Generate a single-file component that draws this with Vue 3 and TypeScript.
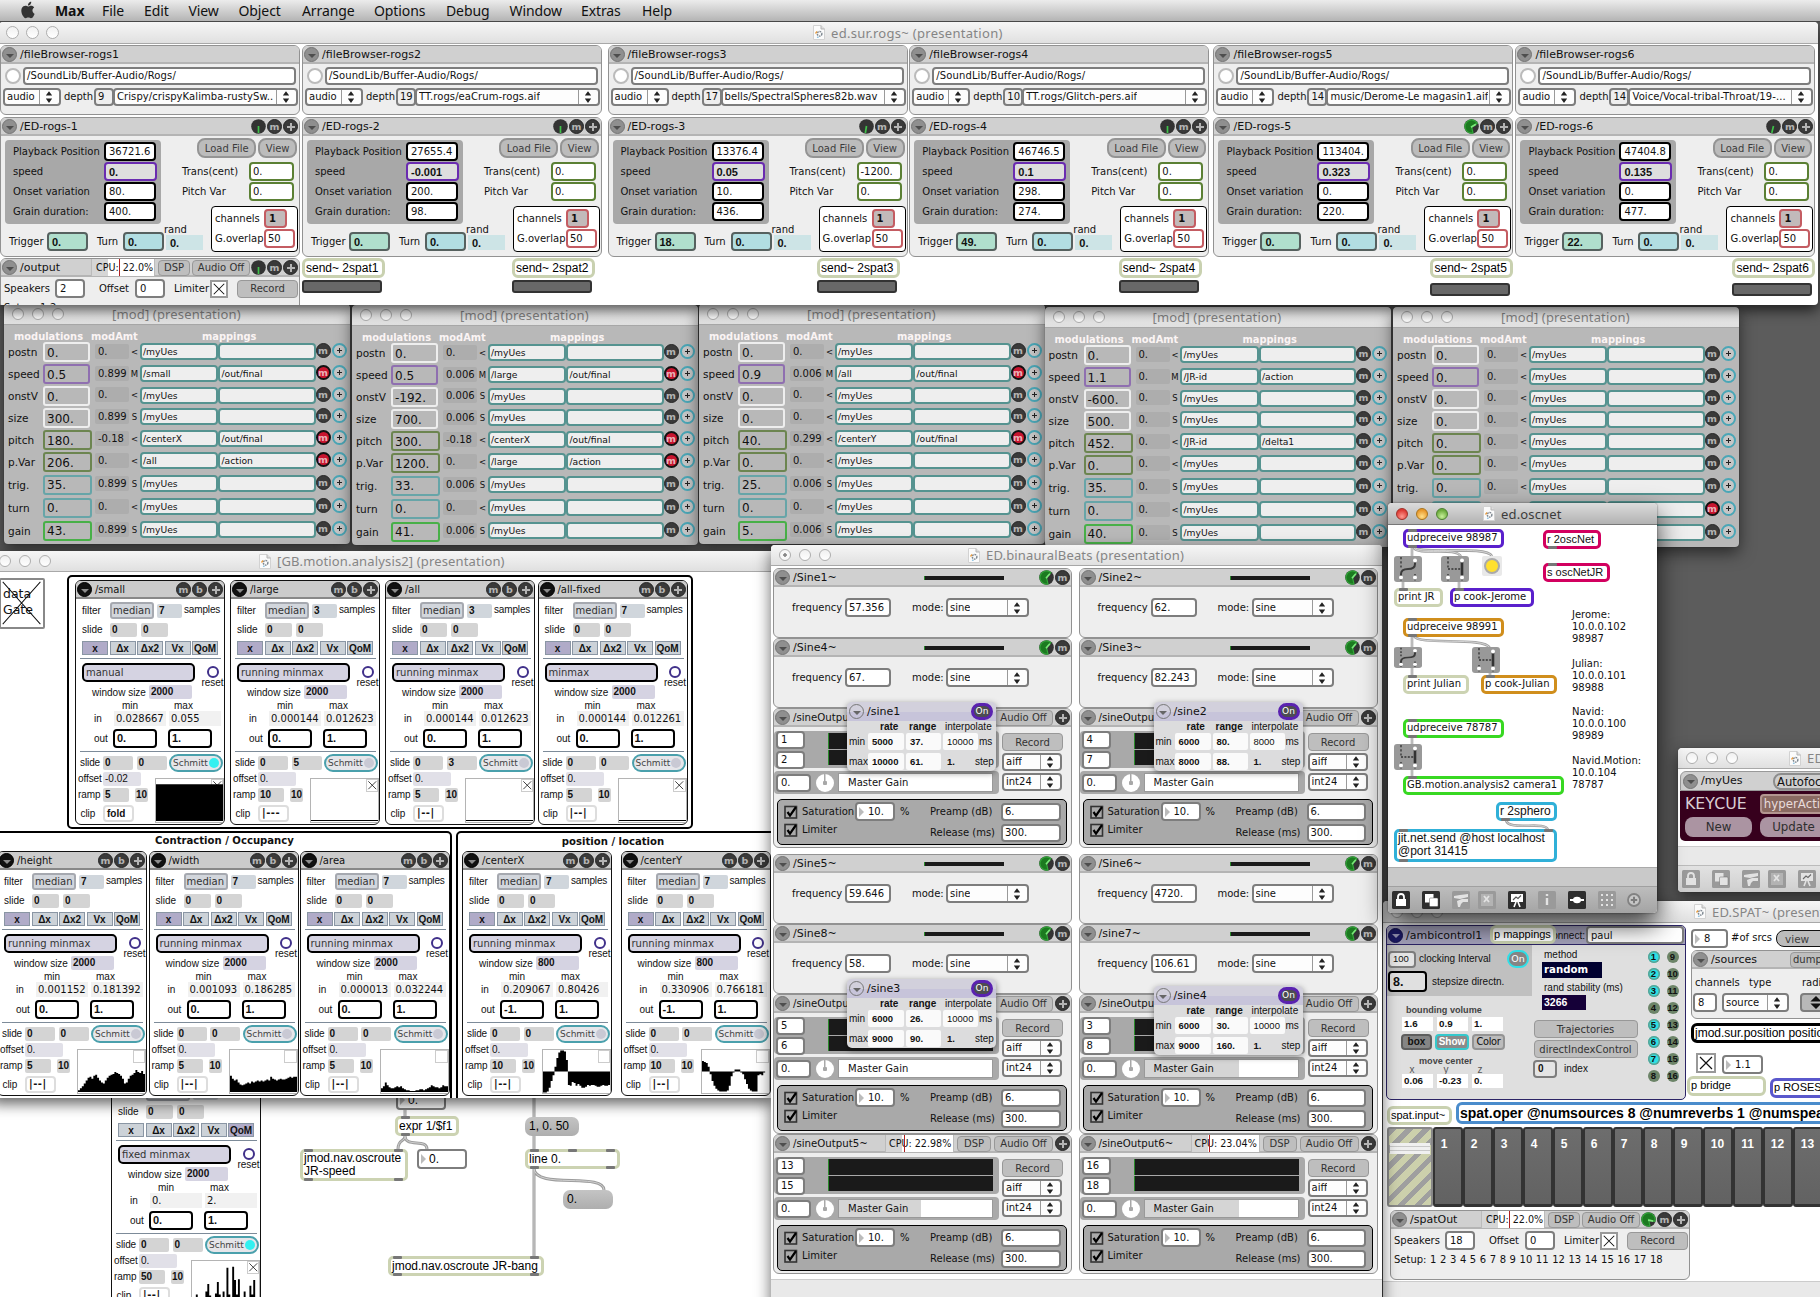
<script setup lang="ts">
import { h } from 'vue'

type P = Record<string, any>

/* ---- shared widgets ---- */
const DocIcon = () =>
  h('svg', { class: 'doc', viewBox: '0 0 12 15' }, [
    h('path', { d: 'M.5.5h7.5l3.5 3.5v10.5h-11z', fill: '#fbfbfb', stroke: '#d2d2d2' }),
    h('path', { d: 'M8 .5v3.5h3.5', fill: '#ddd', stroke: '#b5b5b5' }),
    h('circle', { cx: 6.6, cy: 8.8, r: 2.3, fill: 'none', stroke: '#7d8790', 'stroke-width': 1.4, 'stroke-dasharray': '1.6 .8' }),
    h('path', { d: 'M2.5 8.5l1.5-2', stroke: '#e79a3c', 'stroke-width': 1.3 }),
    h('path', { d: 'M4 12l1.5 .5', stroke: '#6fb4dc', 'stroke-width': 1.3 }),
  ])

const TitleBar = (p: P) =>
  h('div', { class: ['tbar', { live: p.live }] }, [
    h('i', { class: ['tl', p.live ? 'red' : '', p.dot ? 'dot' : ''] }),
    h('i', { class: ['tl', p.live ? 'amber' : ''] }),
    h('i', { class: ['tl', p.live ? 'green' : ''] }),
    h('span', { class: 'ttl' }, [p.doc ? h(DocIcon) : null, p.title]),
  ])

const Fold = () => h('i', { class: 'fold' })

const Knob = (p: P) => {
  const a = ((p.a as number) * Math.PI) / 180
  const r = 6.6
  const x = 7.5 + r * Math.sin(a)
  const y = 7.5 - r * Math.cos(a)
  const full = !!p.full
  return h('svg', { class: 'knob', viewBox: '0 0 15 15' }, [
    h('circle', { cx: 7.5, cy: 7.5, r: 7.3, fill: '#333' }),
    full
      ? h('path', { d: `M7.5 7.5L9 14A${r} ${r} 0 1 1 ${x} ${y}z`, fill: '#1c7a20', stroke: '#33a63a', 'stroke-width': 1.2 })
      : null,
    h('path', {
      d: full ? `M7 8.2L${7.5 + 5 * Math.sin(a)} ${7.5 - 5 * Math.cos(a)}` : `M7.5 7L${x} ${y}`,
      stroke: full ? '#7be87a' : '#3fc24a',
      'stroke-width': 1.7,
    }),
  ])
}

const Rnd = (p: P) => h('i', { class: ['rnd', { hot: p.hot }] }, p.t === '+' ? [h('b', { class: 'plus' })] : p.t)

const Sel = (p: P) =>
  h('div', { class: 'fld sel' }, [
    h('span', p.text),
    h('svg', { viewBox: '0 0 20 16' }, [
      h('path', { d: 'M.5 0v16', stroke: '#999' }),
      h('path', { d: 'M10 2.2l3.2 4.4H6.8zM10 14l3.2-4.4H6.8z', fill: '#222' }),
    ]),
  ])

const Cross = () =>
  h('svg', { class: 'cross', viewBox: '0 0 16 16', preserveAspectRatio: 'none' }, [
    h('path', { d: 'M2 2l12 12M14 2L2 14', stroke: '#111', 'stroke-width': 1.2 }),
  ])

const Tick = () =>
  h('svg', { class: 'tick', viewBox: '0 0 14 14' }, [
    h('rect', { x: 1, y: 1.5, width: 11.5, height: 11.5, fill: '#aaa', stroke: '#333', 'stroke-width': 1.6 }),
    h('path', { d: 'M3.5 7l2.5 3.6L12 2', fill: 'none', stroke: '#000', 'stroke-width': 2.2 }),
  ])

const Cpu = (p: P) =>
  h('div', { class: 'cpu' }, [h('span', 'CPU:'), h('i'), h('span', p.v)])

/* Patch gate glyph: k = 'c' curved path, 's' straight path */
const Gate = (p: P) =>
  h('svg', { class: 'gate', viewBox: '0 0 28 26', preserveAspectRatio: 'none' }, [
    h('rect', { width: 28, height: 26, rx: 3, fill: '#999' }),
    h('path', { d: 'M7 1v11M7 18v8M21 18v8', stroke: '#444', 'stroke-width': 1.6, 'stroke-dasharray': '2.2 2' }),
    p.k === 'c'
      ? h('path', { d: 'M21 5v3c0 4-3 5-7 5s-7 1-7 5v3', fill: 'none', stroke: '#3a3a3a', 'stroke-width': 2 })
      : h('path', { d: 'M21 5v14', stroke: '#333', 'stroke-width': 2.6 }),
    p.k === 's' ? h('path', { d: 'M7 13h13', stroke: '#333', 'stroke-width': 1.6, 'stroke-dasharray': '2 1.4' }) : null,
    ...[[21, 4.5], [7, 21.5], [21, 21.5]].map(([cx, cy]) => h('circle', { cx, cy, r: 2, fill: '#fff' })),
  ])

const path = (d: string, stroke = '#fff', w = 1.8) => h('path', { d, fill: 'none', stroke, 'stroke-width': w })
const toolArt: Record<string, () => any[]> = {
  lock: () => [h('rect', { x: 4, y: 8, width: 10, height: 7, fill: '#fff' }), path('M6 8V6a3 3 0 016 0v2')],
  layers: () => [
    h('rect', { x: 3, y: 3, width: 8.5, height: 8.5, fill: '#fff' }),
    h('rect', { x: 7.5, y: 7, width: 8.5, height: 8.5, rx: 1, fill: '#fff', stroke: '#555', 'stroke-width': 0.5 }),
  ],
  tools: () => [
    h('path', { d: 'M2 5l6-1 8-1v3l-8 2-6-1z', fill: '#fff' }),
    h('path', { d: 'M5 10l5-2 6 0v3l-5 0-2 2-1 3H6z', fill: '#fff' }),
  ],
  close: () => [h('rect', { x: 3, y: 3, width: 12, height: 12, fill: '#fff', opacity: 0.35 }), path('M6 5l5 6M11 5l-5 6')],
  board: () => [
    h('path', { d: 'M3 3h12v8H3z', fill: '#fff' }),
    path('M5 9l3-3 2 1.5 3-3', '#555', 1.1),
    path('M8 11l-2 5M10 11l2 5', '#fff', 1.6),
  ],
  info: () => [path('M9 7v7M9 3v2', '#fff', 2.4)],
  node: () => [path('M2 9h14', '#fff', 2), h('ellipse', { cx: 9, cy: 9, rx: 4, ry: 3.2, fill: '#fff' })],
  grid: () => [h('path', { d: 'M3 4h12M3 9h12M3 14h12', stroke: '#fff', 'stroke-width': 2, 'stroke-dasharray': '2 3' })],
}
const Tool = (p: P) =>
  p.k === 'add'
    ? h('svg', { class: 'tool', viewBox: '0 0 18 18' }, [
        h('circle', { cx: 9, cy: 9, r: 6, fill: '#c6c6c6', stroke: '#828282', 'stroke-width': 1.8 }),
        path('M9 5.8v6.4M5.8 9h6.4', '#7c7c7c', 2),
      ])
    : h('svg', { class: 'tool', viewBox: '0 0 18 18' }, [
        h('rect', { width: 18, height: 18, rx: 1.5, fill: p.on ? '#2e2e2e' : '#9a9a9a' }),
        h('g', { opacity: p.on ? 1 : 0.72 }, toolArt[p.k]()),
      ])

/* ---- data ---- */
const menu: [string, number][] = [
  ['Max', 47], ['File', 42], ['Edit', 44.5], ['View', 50], ['Object', 63.5], ['Arrange', 72],
  ['Options', 72], ['Debug', 63.5], ['Window', 71.5], ['Extras', 61], ['Help', 40],
]

interface Rog {
  gap: number; depth: string; file: string; pos: string; speed: string; onset: string; dur: string
  trans: string; trig: string; a: number; full?: boolean; sends: string[]; drop?: number; pull?: number
}
const rogs: Rog[] = [
  { gap: 0, depth: '9', file: 'Crispy/crispyKalimba-rustySw..', pos: '36721.6', speed: '0.', onset: '80.', dur: '400.', trans: '0.', trig: '0.', a: 180, sends: [] },
  { gap: 2, depth: '19', file: 'TT.rogs/eaCrum-rogs.aif', pos: '27655.4', speed: '-0.001', onset: '200.', dur: '98.', trans: '0.', trig: '0.', a: 180, sends: ['1', '2'], pull: 7 },
  { gap: 5.5, depth: '17', file: 'bells/SpectralSpheres82b.wav', pos: '13376.4', speed: '0.05', onset: '10.', dur: '436.', trans: '-1200.', trig: '18.', a: 190, sends: ['3'], pull: 7.5 },
  { gap: 1.8, depth: '10', file: 'TT.rogs/Glitch-pers.aif', pos: '46746.5', speed: '0.1', onset: '298.', dur: '274.', trans: '0.', trig: '49.', a: 180, sends: ['4'], pull: 7.5 },
  { gap: 4.2, depth: '14', file: 'music/Derome-Le magasin1.aif', pos: '113404.', speed: '0.323', onset: '0.', dur: '220.', trans: '0.', trig: '0.', a: 62, full: true, sends: ['5'], drop: 3 },
  { gap: 2, depth: '14', file: 'Voice/Vocal-tribal-Throat/19-...', pos: '47404.8', speed: '0.135', onset: '0.', dur: '477.', trans: '0.', trig: '22.', a: 195, sends: ['6'], drop: 3 },
]

const labels = ['postn', 'speed', 'onstV', 'size', 'pitch', 'p.Var', 'trig.', 'turn', 'gain']
const tones = ['w', 'p', 'w', 'w', 'o', 'o', 't', 't', 'g']
const rowH = [22, 22, 21.5, 21.5, 22, 22.5, 23.5, 22.5, 23]
const U = '/myUes'
const F = '/out/final'
const mods = [
  { x: 4, y: 304, v: ['0.', '0.5', '0.', '300.', '180.', '206.', '35.', '0.', '43.'], a: ['0.', '0.899', '0.', '0.899', '-0.18', '0.', '0.899', '0.', '0.899'], s: '<M<S<<S<S', m: [U, '/small', U, U, '/centerX', '/all', U, U, U], n: ['', F, '', '', F, '/action', '', '', ''], hot: [1, 4, 5] },
  { x: 352, y: 305, v: ['0.', '0.5', '-192.', '700.', '300.', '1200.', '33.', '0.', '41.'], a: ['0.', '0.006', '0.006', '0.006', '-0.18', '0.', '0.006', '0.', '0.006'], s: '<MSS<<S<S', m: [U, '/large', U, U, '/centerX', '/large', U, U, U], n: ['', F, '', '', F, '/action', '', '', ''], hot: [1, 4, 5] },
  { x: 699, y: 304, v: ['0.', '0.9', '0.', '0.', '40.', '0.', '25.', '0.', '5.'], a: ['0.', '0.006', '0.', '0.', '0.299', '0.', '0.006', '0.', '0.006'], s: '<M<<<<S<S', m: [U, '/all', U, U, '/centerY', U, U, U, U], n: ['', F, '', '', F, '', '', '', ''], hot: [1, 4] },
  { x: 1044.5, y: 307, v: ['0.', '1.1', '-600.', '500.', '452.', '0.', '35.', '0.', '40.'], a: Array(9).fill('0.'), s: '<MSS<<S<S', m: [U, '/JR-id', U, U, '/JR-id', U, U, U, U], n: ['', '/action', '', '', '/delta1', '', '', '', ''], hot: [] as number[] },
  { x: 1393, y: 307, v: Array(9).fill('0.'), a: Array(9).fill('0.'), s: '<<<<<<<<<', m: Array(9).fill(U), n: Array(9).fill(''), hot: [7] },
]

interface Mo {
  x: number; y: number; name: string; n: string; mode: string; win: string; lo: string; hi: string; out: string
  s2: string; off: string; ramp: string; clip: string; led?: boolean; tog?: boolean; sel?: number; g: number[]; mid?: boolean
}
const mo = (o: Partial<Mo>): Mo => ({
  x: 0, y: 580, name: '', n: '7', mode: 'running minmax', win: '2000', lo: '', hi: '', out: '0.',
  s2: '0', off: '0.', ramp: '5', clip: '|--|', g: [], ...o,
})
const flat = (v: number) => Array(35).fill(v)
const motion: Mo[] = [
  mo({ x: 75, name: '/small', mode: 'manual', lo: '0.028667', hi: '0.055', off: '-0.02', clip: 'fold', led: true, tog: true, g: flat(38.5) }),
  mo({ x: 230, name: '/large', n: '3', lo: '0.000144', hi: '0.012623', s2: '5', ramp: '10', clip: '|---', tog: true, g: flat(1) }),
  mo({ x: 385, name: '/all', n: '3', lo: '0.000144', hi: '0.012623', s2: '3', tog: true, g: flat(1) }),
  mo({ x: 537.5, name: '/all-fixed', mode: 'minmax', lo: '0.000144', hi: '0.012261', tog: true, g: flat(1) }),
  mo({ x: -3, y: 851, name: '/height', lo: '0.001152', hi: '0.181392', g: [2, 4, 6, 9, 12, 15, 16, 14, 17, 18, 15, 12, 10, 9, 12, 15, 17, 18, 19, 21, 20, 19, 17, 14, 9, 10, 14, 17, 18, 20, 23, 21, 20, 22, 19] }),
  mo({ x: 148.5, y: 851, name: '/width', lo: '0.001093', hi: '0.186285', g: [17, 14, 12, 13, 10, 8, 7, 8, 9, 10, 9, 11, 10, 11, 12, 11, 12, 11, 12, 13, 12, 16, 14, 13, 12, 13, 14, 13, 13, 14, 15, 16, 15, 16, 16] }),
  mo({ x: 299.5, y: 851, name: '/area', lo: '0.000013', hi: '0.032244', g: [4, 6, 10, 7, 5, 4, 4, 5, 6, 5, 6, 4, 3, 2, 2, 1, 1, 1, 2, 2, 3, 3, 2, 3, 4, 5, 7, 6, 5, 5, 4, 5, 7, 6, 6] }),
  mo({ x: 462, y: 851, name: '/centerX', win: '800', lo: '0.209067', hi: '0.80426', out: '-1.', ramp: '10', mid: true, g: [-22, -22, -21, -17, -10, -4, 5, 14, 20, 22, 22, 21, 12, -14, -15, -11, -12, -15, -13, -15, -17, -17, -16, -14, -15, -14, -14, -15, -16, -16, -15, -14, -15, -15, -14] }),
  mo({ x: 620.5, y: 851, name: '/centerY', win: '800', lo: '0.330906', hi: '0.766181', out: '-1.', ramp: '10', mid: true, g: [11, 10, 9, 5, -3, -10, -15, -18, -20, -21, -21, -21, -21, -20, -15, -5, -1, 2, 2, 2, -1, -3, -8, -13, -18, -20, -21, -21, -21, -4, -3, -4, -1, 0, 0] }),
]
const lower = mo({ x: 111, y: 1062, name: '/QoM', mode: 'fixed minmax', lo: '0.', hi: '2.', ramp: '50', led: true, tog: true, sel: 4, g: [0, 3, 9, 3, 1, 6, 2, 12, 20, 8, 3, 1, 10, 22, 9, 4, 12, 3, 37, 9, 3, 38, 24, 9, 25, 5, 3, 12, 3, 2, 18, 9, 24, 6, 3] })
const moSets: { cls: string; items: Mo[] }[] = [
  { cls: 'under', items: [lower] },
  { cls: 'over', items: motion },
]
const tabs = ['x', 'Δx', 'Δx2', 'Vx', 'QoM']
function area(g: number[], mid?: boolean): string {
  const base = mid ? 22.5 : 44
  let d = `M0 ${base}`
  g.forEach((v, i) => { d += `V${base - v}H${(i + 1) * 2}` })
  return d + `V${base}z`
}

const sines = [
  [
    { name: '/Sine1~', f: '57.356' }, { name: '/Sine4~', f: '67.' },
    { out: '/sineOutput1~', a: '1', b: '2', cpu: '22.98%', fill: 0 },
    { name: '/Sine5~', f: '59.646', gap: 6 }, { name: '/Sine8~', f: '58.' },
    { out: '/sineOutput3~', a: '5', b: '6', cpu: '22.98%', fill: 0 },
    { out: '/sineOutput5~', a: '13', b: '15', cpu: '22.98%', fill: 82 },
  ],
  [
    { name: '/Sine2~', f: '62.' }, { name: '/Sine3~', f: '82.243' },
    { out: '/sineOutput2~', a: '4', b: '7', cpu: '23.04%', fill: 0 },
    { name: '/Sine6~', f: '4720.', gap: 6 }, { name: '/sine7~', f: '106.61' },
    { out: '/sineOutput4~', a: '3', b: '8', cpu: '23.04%', fill: 94 },
    { out: '/sineOutput6~', a: '16', b: '18', cpu: '23.04%', fill: 94 },
  ],
] as any[][]
const pops = [
  { x: 76, y: 157, n: '/sine1', r: ['5000', '10000'], g: ['37.', '61.'], i: '10000' },
  { x: 382.5, y: 157, n: '/sine2', r: ['6000', '8000'], g: ['80.', '88.'], i: '8000' },
  { x: 76, y: 434, n: '/sine3', r: ['6000', '9000'], g: ['26.', '90.'], i: '10000' },
  { x: 382.5, y: 441, n: '/sine4', r: ['6000', '9000'], g: ['30.', '160.'], i: '10000' },
]

/* oscnet patch objects: text, x, y, w, h, colour, font */
const osc: [string, number, number, number, number, string, string][] = [
  ['udpreceive 98987', 15, 4, 101, 19, '#5a20cc', 'v'],
  ['r 2oscNet', 155, 5, 58, 19, '#d2005f', 'a'],
  ['s oscNetJR', 155, 38, 67, 19, '#d2005f', 'a'],
  ['print JR', 6, 63, 49, 19, '#ccd3b2', 'v'],
  ['p cook-Jerome', 62, 63, 84, 19, '#5a20cc', 'v'],
  ['udpreceive 98991', 15, 93, 101, 19, '#d08e1c', 'v'],
  ['print Julian', 15, 150, 66, 19, '#ccd3b2', 'v'],
  ['p cook-Julian', 93, 150, 76, 19, '#d08e1c', 'v'],
  ['udpreceive 78787', 15, 194, 101, 19, '#38d822', 'v'],
  ['GB.motion.analysis2 camera1', 15, 251, 161, 19, '#38d822', 'v'],
  ['r 2sphero', 108, 277, 61, 19, '#30b0d8', 'a l'],
  ['jit.net.send @host localhost @port 31415', 6, 304, 163, 33, '#30b0d8', 'a l wrap'],
]
const gates: [string, number, number, number][] = [
  ['c', 6, 31, 26], ['s', 53, 31, 26], ['c', 6, 122, 21], ['s', 84, 122, 26], ['s', 6, 219, 26],
]
/* inlet and outlet tabs on the oscnet objects: x, y */
const lets: [number, number][] = [
  [20, 4], [20, 20], [160, 21], [160, 38], [11, 63], [67, 63], [20, 93], [20, 109], [20, 150],
  [98, 150], [20, 194], [20, 210], [20, 251], [113, 293], [11, 304], [156, 304], [11, 334],
]
const lets2: [number, number][] = [
  [401, 18], [401, 35], [304, 51], [394, 51], [304, 80], [394, 80], [530, 51], [568, 51], [606, 51],
  [530, 68], [606, 68], [393, 158], [530, 158], [393, 175], [530, 175],
]
const notes: [string[], number][] = [
  [['Jerome:', '10.0.0.102', '98987'], 84], [['Julian:', '10.0.0.101', '98988'], 133],
  [['Navid:', '10.0.0.100', '98989'], 181], [['Navid.Motion:', '10.0.104', '78787'], 230],
]
const oscTools: [string, boolean, number][] = [
  ['lock', true, 4], ['layers', true, 12], ['tools', false, 12], ['close', false, 8], ['board', true, 12],
  ['info', false, 12], ['node', true, 12], ['grid', false, 12], ['add', false, 9],
]
const srcOn = [1, 2, 3, 5, 6, 7]
</script>

<template>
  <div class="desk">
    <!-- menu bar -->
    <header class="menubar">
      <svg class="apple" viewBox="3 1 18 22"><path d="M18.71 19.5c-.83 1.24-1.71 2.45-3.05 2.47-1.34.03-1.77-.79-3.29-.79-1.53 0-2 .77-3.27.82-1.31.05-2.3-1.32-3.14-2.53C4.25 17 2.94 12.45 4.7 9.39c.87-1.52 2.43-2.48 4.12-2.51 1.28-.02 2.5.87 3.29.87.78 0 2.26-1.07 3.81-.91.65.03 2.47.26 3.64 1.98-.09.06-2.17 1.28-2.15 3.81.03 3.02 2.65 4.03 2.68 4.04-.03.07-.42 1.44-1.38 2.83M13 3.5c.73-.83 1.94-1.46 2.94-1.5.13 1.17-.34 2.35-1.04 3.19-.69.85-1.83 1.51-2.95 1.42-.15-1.15.41-2.35 1.05-3.11z" fill="#333" /></svg>
      <span v-for="[t, w] in menu" :key="t" :class="{ bold: t === 'Max' }" :style="{ width: w + 'px' }">{{ t }}</span>
    </header>

    <!-- mod windows -->
    <section v-for="(m, k) in mods" :key="k" class="win mod" :style="{ left: m.x + 'px', top: m.y + 'px' }">
      <TitleBar title="[mod] (presentation)" />
      <div class="mod-heads"><b>modulations</b><b>modAmt</b><b>mappings</b></div>
      <div class="mod-body">
        <div class="mod-left">
          <div v-for="(l, i) in labels" :key="l" class="ml"><span>{{ l }}</span><div class="mv" :class="tones[i]">{{ m.v[i] }}</div></div>
        </div>
        <div class="mod-right">
          <div v-for="(l, i) in labels" :key="l" class="mr" :style="{ height: rowH[i] + 'px' }">
            <div class="amt">{{ m.a[i] }}</div><em>{{ m.s[i] }}</em>
            <div class="map">{{ m.m[i] }}</div><div class="map mb">{{ m.n[i] }}</div>
            <Rnd t="m" :hot="m.hot.includes(i)" /><i class="add"></i>
          </div>
        </div>
      </div>
    </section>

    <!-- ed.sur.rogs -->
    <section class="win rogs">
      <TitleBar title="ed.sur.rogs~ (presentation)" :doc="true" />
      <div class="cols">
        <div v-for="(r, i) in rogs" :key="i" class="col" :style="{ marginLeft: r.gap + 'px' }">
          <div class="mdl fb">
            <div class="hd"><Fold /><span>/fileBrowser-rogs{{ i + 1 }}</span></div>
            <div class="fb1"><i class="bang"></i><div class="fld path">/SoundLib/Buffer-Audio/Rogs/</div></div>
            <div class="fb2"><Sel text="audio" class="s-audio" /><span class="dp">depth</span><div class="fld dn">{{ r.depth }}</div><Sel :text="r.file" class="s-file" /></div>
          </div>
          <div class="mdl ed">
            <div class="hd"><Fold /><span>/ED-rogs-{{ i + 1 }}</span><Knob :a="r.a" :full="r.full" class="push" /><Rnd t="m" /><Rnd t="+" /></div>
            <div class="ed-b">
              <div class="ed-l">
                <div class="blk">
                  <div><span>Playback Position</span><div class="fld k">{{ r.pos }}</div></div>
                  <div><span>speed</span><div class="fld k sp">{{ r.speed }}</div></div>
                  <div><span>Onset variation</span><div class="fld k">{{ r.onset }}</div></div>
                  <div><span>Grain duration:</span><div class="fld k">{{ r.dur }}</div></div>
                </div>
                <div class="trg">
                  <span class="t1">Trigger</span><div class="fld tg">{{ r.trig }}</div>
                  <span class="t2">Turn</span><div class="fld tn">0.</div>
                  <div class="rand"><span>rand</span><div>0.</div></div>
                </div>
              </div>
              <div class="ed-r">
                <div class="bts"><div class="btn">Load File</div><div class="btn">View</div></div>
                <div class="tr"><span>Trans(cent)</span><div class="fld gr">{{ r.trans }}</div></div>
                <div class="tr"><span>Pitch Var</span><div class="fld gr">0.</div></div>
                <div class="chn">
                  <div><span>channels</span><div class="fld c1">1</div></div>
                  <div><span>G.overlap</span><div class="fld c2">50</div></div>
                </div>
              </div>
            </div>
          </div>
          <div v-if="i === 0" class="mdl out">
            <div class="hd"><Fold /><span>/output</span><Cpu v="22.0%" class="push" /><div class="sb dsp">DSP</div><div class="sb aud">Audio Off</div><Knob :a="180" /><Rnd t="m" /><Rnd t="+" /></div>
            <div class="out-r"><span>Speakers</span><div class="fld">2</div><span class="o2">Offset</span><div class="fld">0</div><span class="o3">Limiter</span><div class="tog"><Cross /></div><div class="sb rec">Record</div></div>
            <div class="setup">Setup: 1 2</div>
          </div>
          <div v-else class="sends" :style="{ paddingRight: (r.pull || 0) + 'px' }">
            <div v-for="s in r.sends" :key="s" class="send"><div class="node">send~ 2spat{{ s }}</div><i :style="{ marginTop: 2 + (r.drop || 0) + 'px' }"></i></div>
          </div>
        </div>
      </div>
    </section>

    <!-- patch beneath the motion window -->
    <section class="patch">
      <svg class="wires" viewBox="0 0 771 199">
        <g fill="none" stroke="#9d9d9d" stroke-width="3">
          <path d="M405 10v10M405 38c0 6-7 3-7 13M405 38c0 12 22 2 22 13M534 0v20M534 38v13M534 70v88M534 70c0 22 70 4 70 22" />
        </g>
        <g fill="none" stroke="#d0d0d0" stroke-width="1">
          <path d="M405 10v10M405 38c0 6-7 3-7 13M405 38c0 12 22 2 22 13M534 0v20M534 38v13M534 70v88M534 70c0 22 70 4 70 22" />
        </g>
      </svg>
      <div class="pn num n1">0.</div>
      <div class="pn obj n2">expr 1/$f1</div>
      <div class="pn obj n3">jmod.nav.oscroute JR-speed</div>
      <div class="pn num n4">0.</div>
      <div class="pn msg n5">1, 0. 50</div>
      <div class="pn obj n6">line 0.</div>
      <div class="pn msg n7">0.</div>
      <div class="pn obj n8">jmod.nav.oscroute JR-bang</div>
      <svg class="wires" viewBox="0 0 771 199"><rect v-for="(l, i) in lets2" :key="i" :x="l[0]" :y="l[1]" width="9" height="3" rx="1" fill="#777" /></svg>
    </section>

    <!-- motion analysis window -->
    <section class="win motion">
      <TitleBar title="[GB.motion.analysis2] (presentation)" :doc="true" />
      <div class="gatebox"><svg viewBox="0 0 48 50" preserveAspectRatio="none"><path d="M2 2L45 47M45 2L2 47" stroke="#111" stroke-width="1.1" /></svg>data<br />Gate</div>
      <div class="grp g1"></div>
      <div class="grp g2"><b>Contraction / Occupancy</b></div>
      <div class="grp g3"><b>position / location</b></div>
    </section>
    <div v-for="s in moSets" :key="s.cls" class="mset" :class="s.cls">
      <div v-for="m in s.items" :key="m.name" class="mm" :style="{ left: m.x + 'px', top: m.y + 'px' }">
        <div class="mh"><Fold class="blk-fold" /><span>{{ m.name }}</span><Rnd t="m" class="push" /><Rnd t="b" /><Rnd t="+" /></div>
        <div class="m1"><span>filter</span><div class="med">median</div><div class="q q7">{{ m.n }}</div><span class="smp">samples</span></div>
        <div class="m2"><span>slide</span><div class="q">0</div><div class="q">0</div></div>
        <div class="m3"><div v-for="(t, i) in tabs" :key="t" :class="{ on: i === (m.sel || 0) }">{{ t }}</div></div>
        <hr />
        <div class="m4">
          <div class="m4l"><div class="mode">{{ m.mode }}</div><div class="wsz"><span>window size</span><div class="q">{{ m.win }}</div></div></div>
          <div class="rst"><i></i><span>reset</span></div>
        </div>
        <div class="m5"><span>min</span><span>max</span></div>
        <div class="m6"><span>in</span><div>{{ m.lo }}</div><div>{{ m.hi }}</div></div>
        <div class="m7"><span>out</span><div>{{ m.out }}</div><div>1.</div></div>
        <hr />
        <div class="m8"><span>slide</span><div class="q">0</div><div class="q">{{ m.s2 }}</div><div class="sch">Schmitt<i :class="{ on: m.led }"></i></div></div>
        <div class="m9">
          <div class="m9l">
            <div class="offs"><span>offset</span><div>{{ m.off }}</div></div>
            <div class="ramp"><span>ramp</span><div class="q">{{ m.ramp }}</div><div class="q">10</div></div>
            <div class="clip"><span>clip</span><div :class="{ bars: m.clip !== 'fold' }">{{ m.clip }}</div></div>
          </div>
          <div class="gph"><div class="gt"><Cross v-if="m.tog" /></div><svg viewBox="0 0 70 45" preserveAspectRatio="none"><path :d="area(m.g, m.mid)" /></svg></div>
        </div>
      </div>
    </div>

    <!-- binaural beats -->
    <section class="win bin">
      <TitleBar title="ED.binauralBeats (presentation)" :doc="true" :dot="true" />
      <div class="bcols">
        <div v-for="(c, ci) in sines" :key="ci" class="bcol">
          <template v-for="(s, si) in c" :key="si">
            <div v-if="s.name" class="mdl sine" :style="{ marginTop: (s.gap || 0) + 'px' }">
              <div class="hd"><Fold /><span>{{ s.name }}</span><i class="meter push"></i><Knob :a="42" :full="true" /><Rnd t="m" /></div>
              <div class="frq"><span>frequency</span><div class="fld fq">{{ s.f }}</div><span class="md">mode:</span><Sel text="sine" class="s-mode" /></div>
            </div>
            <div v-else class="mdl so">
              <div class="hd"><Fold /><span class="sot">{{ s.out }}</span><Cpu :v="s.cpu" class="push wide" /><div class="sb dsp">DSP</div><div class="sb aud">Audio Off</div><Rnd t="+" /></div>
              <div class="so-b">
                <div class="so-l">
                  <div class="gry g-a"><div class="chs"><div class="fld">{{ s.a }}</div><div class="fld">{{ s.b }}</div></div><div class="mtr"><i></i><i></i></div></div>
                  <div class="gry g-b"><div class="fld">0.</div><i class="dial"></i><div class="gain"><div :style="{ width: s.fill + 'px' }"></div><span>Master Gain</span></div></div>
                </div>
                <div class="so-r"><div class="sb rec2">Record</div><Sel text="aiff" class="s-fmt" /><Sel text="int24" class="s-fmt" /></div>
              </div>
              <div class="sat">
                <div class="sat-l">
                  <div><Tick /><span class="sl">Saturation</span><div class="fld tri">10.</div><span class="pc">%</span></div>
                  <div class="lim"><Tick /><span class="sl">Limiter</span></div>
                </div>
                <div class="sat-r">
                  <div><span class="pr">Preamp (dB)</span><div class="fld pf">6.</div></div>
                  <div><span class="pr">Release (ms)</span><div class="fld pf">300.</div></div>
                </div>
              </div>
            </div>
          </template>
        </div>
      </div>
      <div class="strip"></div>
      <div v-for="p in pops" :key="p.n" class="pop" :style="{ left: p.x + 'px', top: p.y + 'px' }">
        <div class="ph"><Fold class="pf-fold" /><span>{{ p.n }}</span><em>On</em></div>
        <div class="pl"><b>rate</b><b>range</b><span>interpolate</span></div>
        <div class="pw"><span>min</span><b>{{ p.r[0] }}</b><b>{{ p.g[0] }}</b><u>{{ p.i }}</u><span class="ms">ms</span></div>
        <div class="pw"><span>max</span><b>{{ p.r[1] }}</b><b>{{ p.g[1] }}</b><s>1.</s><span class="st">step</span></div>
      </div>
    </section>

    <!-- myUes -->
    <section class="win ues">
      <TitleBar title="ED.cue (presentation)" :doc="true" />
      <div class="uh"><Fold /><span>/myUes</span><div class="auto">Autofocus</div></div>
      <div class="ub">
        <div class="ur"><span>KEYCUE</span><div class="hyp">hyperAction</div></div>
        <div class="ur"><div class="ubt u1">New</div><div class="ubt u2">Update</div></div>
      </div>
      <div class="uf"></div>
      <div class="ut"><Tool v-for="[k, , g] in oscTools.slice(0, 5)" :key="k" :k="k" :style="{ marginLeft: g + 'px' }" /></div>
    </section>

    <!-- SPAT -->
    <section class="win spat">
      <TitleBar title="ED.SPAT~ (presentation)" :doc="true" />
      <div class="canvas">
        <div class="amb">
          <div class="ah"><Fold class="nv-fold" /><span class="at">/ambicontrol1</span><span class="ac">connect:</span><div class="fld ap">paul</div></div>
          <div class="ab">
            <div class="al">
              <div class="ag">
                <div class="r1"><div class="fld h100">100</div><span>clocking Interval</span><em>On</em></div>
                <div class="r2"><div class="fld h8">8.</div><span>stepsize directn.</span></div>
              </div>
              <b class="cap c-1">bounding volume</b>
              <div class="tri3"><b>1.6</b><b>0.9</b><b>1.</b></div>
              <div class="bt3"><b class="x1">box</b><b class="x2">Show</b><b class="x3">Color</b></div>
              <b class="cap c-2">move center</b>
              <div class="xyz"><span>x</span><span>y</span><span>z</span></div>
              <div class="tri3"><b>0.06</b><b>-0.23</b><b>0.</b></div>
            </div>
            <div class="am">
              <span class="ml1">method</span><div class="rdm">random</div>
              <span class="ml2">rand stability (ms)</span><div class="rdm r3">3266</div>
              <div class="sb aj">Trajectories</div><div class="sb aj">directIndexControl</div>
              <div class="ix"><div class="fld">0</div><span>index</span></div>
            </div>
            <div class="src"><i v-for="n in 16" :key="n" :class="{ on: srcOn.includes(n) }">{{ n }}</i></div>
          </div>
        </div>
        <div class="node sm pm">p mappings</div>
        <div class="fld tri q8">8</div><span class="nsrc">#of srcs</span><div class="btn vw">view</div>
        <div class="mdl srcs">
          <div class="hd"><Fold /><span>/sources</span><div class="sb dump">dump</div></div>
          <div class="sc1"><span>channels</span><span>type</span><span>radius</span></div>
          <div class="sc2"><div class="fld">8</div><Sel text="source" class="s-src" /><div class="spin"><svg viewBox="0 0 20 16"><path d="M10 1l6 6H4zM10 15l6-6H4z" fill="#111" /></svg></div></div>
        </div>
        <div class="node jm">jmod.sur.position position</div>
        <div class="tog tg2"><Cross /></div><div class="fld tri q11">1.1</div>
        <div class="node sm pb">p bridge</div>
        <div class="node sm pr2">p ROSES</div>
        <div class="node sm si">spat.input~</div>
        <div class="node big">spat.oper @numsources 8 @numreverbs 1 @numspeakers 18</div>
        <div class="mix"><div class="hatch"><i></i></div><div v-for="n in 13" :key="n" class="ch">{{ n }}</div></div>
        <div class="mdl out spo">
          <div class="hd"><Fold /><span>/spatOut</span><Cpu v="22.0%" class="push" /><div class="sb dsp">DSP</div><div class="sb aud">Audio Off</div><Knob :a="108" :full="true" /><Rnd t="m" /><Rnd t="+" /></div>
          <div class="out-r"><span>Speakers</span><div class="fld">18</div><span class="o2">Offset</span><div class="fld">0</div><span class="o3">Limiter</span><div class="tog"><Cross /></div><div class="sb rec">Record</div></div>
          <div class="setup">Setup: 1 2 3 4 5 6 7 8 9 10 11 12 13 14 15 16 17 18</div>
        </div>
        <div class="strip"></div>
      </div>
    </section>

    <!-- oscnet -->
    <section class="win osc">
      <TitleBar title="ed.oscnet" :doc="true" :live="true" />
      <div class="ocv">
        <svg class="wires" viewBox="0 0 269 342">
          <g fill="none" stroke="#a2a2a2" stroke-width="2.6">
            <path d="M24 22v10M26 23c4 8 44-2 47 9M26 22c6 8 72-2 78 9M15 56v8M71 56v8M24 111v12M26 111c4 10 70 0 76 12M24 142v9M102 147v5M24 212v8M24 244v8M118 295c2 12 40 0 42 10" />
          </g>
          <g fill="none" stroke="#e0e0e0" stroke-width=".8">
            <path d="M24 22v10M26 23c4 8 44-2 47 9M26 22c6 8 72-2 78 9M15 56v8M71 56v8M24 111v12M26 111c4 10 70 0 76 12M24 142v9M102 147v5M24 212v8M24 244v8M118 295c2 12 40 0 42 10" />
          </g>
        </svg>
        <Gate v-for="(g, i) in gates" :key="i" :k="g[0]" :style="{ left: g[1] + 'px', top: g[2] + 'px', height: g[3] + 'px' }" />
        <div class="ybang"><i></i></div>
        <div v-for="o in osc" :key="o[0]" class="ob" :class="o[6]" :style="{ left: o[1] + 'px', top: o[2] + 'px', width: o[3] + 'px', height: o[4] + 'px', borderColor: o[5] }">{{ o[0] }}</div>
        <svg class="wires" viewBox="0 0 269 342"><rect v-for="(l, i) in lets" :key="i" :x="l[0]" :y="l[1]" width="9" height="3" rx="1" fill="#777" /></svg>
        <div v-for="n in notes" :key="n[1]" class="note" :style="{ top: n[1] + 'px' }"><div v-for="l in n[0]" :key="l">{{ l }}</div></div>
      </div>
      <div class="of1"></div>
      <div class="of2"><Tool v-for="[k, on, g] in oscTools" :key="k" :k="k" :on="on" :style="{ marginLeft: g + 'px' }" /></div>
    </section>
  </div>
</template>

<style>
body { background: #5c5c5c; }
.desk, .desk * { box-sizing: border-box; }
.desk i, .desk em { font-style: normal; }
.tbar { display: flex; align-items: center; height: 21px; flex: none; background: linear-gradient(#f6f6f6, #e0e0e0); border-bottom: 1px solid #a8a8a8; padding-left: 8px; gap: 8px; border-radius: 4px 4px 0 0; }
.tbar.live { background: linear-gradient(#dcdcdc, #b2b2b2); border-color: #777; }
.tl { width: 12px; height: 12px; border-radius: 50%; border: 1px solid #aeaeae; background: linear-gradient(#f0f0f0, #fff); flex: none; }
.tl.dot { background: radial-gradient(circle, #888 0 1.5px, #f8f8f8 2px); }
.tl.red { background: radial-gradient(circle at 50% 75%, #ff9a90, #dd3b34 70%); border-color: #a03028; }
.tl.amber { background: radial-gradient(circle at 50% 75%, #ffe08a, #e8982c 70%); border-color: #a8741c; }
.tl.green { background: radial-gradient(circle at 50% 75%, #c8f09a, #6cab3c 70%); border-color: #4c8030; }
.ttl { display: flex; align-items: center; gap: 6px; font: 13px "Noto Sans", sans-serif; color: #858585; white-space: nowrap; letter-spacing: .15px; }
.live .ttl { color: #3c3c3c; }
.doc { width: 12px; height: 15px; flex: none; }
.fold { width: 15px; height: 15px; border-radius: 50%; background: #8f8f8f; border: 1.5px solid #757575; flex: none; display: flex; align-items: center; justify-content: center; }
.fold::after { content: ""; border: 4px solid transparent; border-top: 4.5px solid #4e4e4e; border-bottom: 0; margin-top: 2px; }
.fold.blk-fold { background: #111; border-color: #000; }
.fold.blk-fold::after { border-top-color: #8c8c8c; }
.fold.pf-fold { background: transparent; border-color: #777; }
.fold.pf-fold::after { border-top-color: #666; }
.fold.nv-fold { background: #1c1a66; border-color: #15134e; }
.fold.nv-fold::after { border-top-color: #9a98b8; }
.knob { width: 15px; height: 15px; flex: none; }
.rnd { width: 15px; height: 15px; border-radius: 50%; background: #3a3a3a; border: 1.5px solid #262626; color: #b4b4b4; font: bold 9.5px/11px "DejaVu Sans", sans-serif; display: flex; align-items: center; justify-content: center; flex: none; }
.rnd.hot { background: #c8152f; border: 2px solid #111; color: #e8b0b8; }
.plus { width: 8px; height: 8px; background: linear-gradient(currentColor, currentColor) center/100% 2px no-repeat, linear-gradient(currentColor, currentColor) center/2px 100% no-repeat; }
.fld { background: #fff; border: 2px solid #7d7d7d; border-radius: 4px; padding: 0 3px; white-space: nowrap; overflow: hidden; display: flex; align-items: center; flex: none; }
.sel { padding: 0 0 0 3px; justify-content: space-between; background: #fdfdfd; }
.sel span { overflow: hidden; min-width: 0; }
.sel svg { width: 20px; height: 16px; flex: none; }
.cross { width: 100%; height: 100%; display: block; }
.tick { width: 14px; height: 14px; flex: none; }
.cpu { display: flex; align-items: center; width: 64px; height: 17px; padding-left: 4px; background: linear-gradient(90deg, #d6d6d6 16px, #fff 16px); border-left: 1px solid #bbb; border-right: 1px solid #bbb; font-size: 9.6px; flex: none; white-space: nowrap; }
.cpu i { width: 1px; height: 100%; background: #b02020; margin: 0 3px 0 0; }
.cpu.wide { width: 69px; font-size: 9.6px; padding-left: 3px; }
.cpu.wide i { margin: 0 10px 0 -8px; }
.gate { position: absolute; width: 28px; }
.tool { width: 18px; height: 18px; flex: none; }
</style>

<style scoped>
.desk { position: relative; width: 1820px; height: 1297px; overflow: hidden; background: #5c5c5c; font: 10px/12px "DejaVu Sans", Verdana, sans-serif; color: #111; }
.menubar { position: relative; z-index: 20; display: flex; align-items: center; height: 22px; background: linear-gradient(#ececec, #b4b4b4); border-bottom: 1px solid #484848; font: 14px "Noto Sans", sans-serif; white-space: nowrap; }
.apple { width: 16px; height: 18px; margin: -1px 19px 0 20px; flex: none; }
.menubar span { flex: none; letter-spacing: -.1px; }
.bold { font-weight: bold; }
.win { position: absolute; display: flex; flex-direction: column; box-shadow: 0 6px 16px rgba(0, 0, 0, .55), 0 0 1px rgba(0, 0, 0, .6); border-radius: 4px; background: #fff; }
.push { margin-left: auto; }

/* mod */
.mod { width: 346px; height: 240px; background: #b8b8b8; overflow: hidden; }
.mod :deep(.ttl) { margin-left: 40px; }
.mod-heads { display: flex; height: 15.5px; padding: 5.5px 0 0 10px; color: #fbf4f4; line-height: 11px; font-size: 9.9px; }
.mod-heads b:nth-child(1) { width: 77px; }
.mod-heads b:nth-child(2) { width: 111px; }
.mod-body { display: flex; }
.mod-left { width: 90px; padding: .8px 0 0 4px; }
.ml { display: flex; align-items: center; height: 22px; font-size: 10.5px; }
.ml:nth-child(n+7) { height: 23px; }
.ml span { width: 35px; white-space: nowrap; }
.mv { width: 47px; height: 20px; border: 2px solid #eee; border-radius: 3px; display: flex; align-items: center; padding-left: 2px; font-size: 12px; padding-top: 1px; }
.ml:nth-child(n+5) .mv { width: 49px; }
.mv.p { border-color: #8f6fb0; }
.mv.o { border-color: #6c8550; }
.mv.t { border-color: #67a5a8; }
.mv.g { border-color: #48b048; }
.mr { display: flex; align-items: center; }
.amt { width: 34px; height: 15px; background: #adadad; border-radius: 2px; padding: 2px 0 0 3px; margin: -1px 0 0 1px; }
.mr em { width: 11px; margin: 0 -.5px 0 0; font-size: 8.5px; text-align: center; }
.map { width: 78.5px; height: 17px; border: 2px solid #559390; border-radius: 4px; background: #eee; font-size: 9.2px; line-height: 14px; padding-left: 1.5px; white-space: nowrap; }
.map.mb { width: 97.5px; }
.mr :deep(.rnd) { margin-top: -2px; }
.add { width: 15px; height: 15px; border: 2px solid #4aa6b6; border-radius: 50%; margin: -2px 0 0 1px; background: linear-gradient(#222, #222) center/5px 1px no-repeat, linear-gradient(#222, #222) center/1px 5px no-repeat, #c6c6c6; }

/* modules */
.mdl { border: 1px solid #929292; border-radius: 6px; background: #eee; overflow: hidden; flex: none; }
.hd { display: flex; align-items: center; height: 18px; background: #d0d0d0; border-bottom: 2px solid #b4b4b4; padding: 1px 1px 0; gap: 1px; font-size: 11px; }
.hd > span { margin-left: 2px; white-space: nowrap; }

/* rogs */
.rogs { left: -1px; top: 22px; width: 1819px; height: 283px; overflow: hidden; z-index: 5; box-shadow: 0 5px 14px rgba(0, 0, 0, .7); }
.rogs :deep(.tbar) { height: 22px; padding-left: 7px; }
.rogs :deep(.tl) { width: 13px; height: 13px; margin-right: -1px; }
.rogs :deep(.ttl) { margin-left: 747px; letter-spacing: .3px; }
.cols { display: flex; padding: 1px 0 0 1px; }
.col { width: 300px; flex: none; }
.fb { height: 70px; margin-bottom: 2px; }
.fb1 { display: flex; align-items: center; height: 20px; padding: 2px 0 0 4px; margin-top: 1px; }
.bang { width: 16px; height: 16px; border: 2px solid #bbb; border-radius: 50%; background: #fff; margin-right: 2px; }
.path { width: 273px; height: 18px; letter-spacing: .12px; padding-left: 2px; }
.fb2 { display: flex; align-items: center; padding: 3px 0 0 2px; }
.fb2 .fld { height: 18px; }
.s-audio { width: 58px; padding-left: 2px; }
.dp { width: 33px; padding-left: 3px; }
.dn { width: 20px; background: #eee; margin-right: -1px; padding: 0 2px; }
.s-file { width: 185px; padding-left: 2px; letter-spacing: .08px; }
.ed { height: 140px; margin-bottom: 1px; }
.ed-b { display: flex; justify-content: space-between; }
.ed-l { width: 170px; }
.blk { margin: 4px 0 0 4px; width: 156px; height: 84px; padding-top: 2px; background: #a8a8a8; border-radius: 4px; display: flex; flex-direction: column; gap: 1px; }
.blk > div { display: flex; align-items: center; height: 19px; }
.blk span { width: 99px; padding-left: 8px; white-space: nowrap; }
.blk .k { width: 52px; height: 19px; border-color: #000; }
.blk .sp { width: 53px; border-color: #6a2bb0; background: #dedede; font: bold 11px "Liberation Sans", sans-serif; }
.trg { display: flex; align-items: flex-end; height: 27px; margin-left: 8px; width: 200px; line-height: 19px; }
.t1 { width: 38px; }
.t2 { width: 35px; padding-left: 9px; }
.tg, .tn { width: 41px; height: 19px; border-color: #56615f; background: #b0dfcd; font: bold 11px "Liberation Sans", sans-serif; }
.tn { background: #b2dee2; }
.rand { margin-left: 2px; line-height: 11px; padding-bottom: 1px; }
.rand span { margin-left: -2px; }
.rand div { width: 37px; height: 15px; background: #cde4e6; font: bold 11px/16px "Liberation Sans", sans-serif; padding-left: 4px; }
.ed-r { display: flex; flex-direction: column; align-items: flex-end; flex: none; margin-left: -20px; }
.btn { height: 20px; border: 2px solid #949494; border-radius: 8px; background: #bcbcbc; color: #3c3c3c; padding: 0 5.5px; display: flex; align-items: center; justify-content: center; white-space: nowrap; }
.bts { display: flex; gap: 2px; margin: 2px 2px 4px 0; }
.bts .btn { padding-top: 1px; }
.tr { display: flex; align-items: center; margin: 0 5px 1px 0; white-space: nowrap; }
.tr span { width: 67px; }
.gr { width: 45px; height: 19px; border-color: #5b8034; padding: 0 2px; }
.chn { width: 87px; height: 46px; margin: 4px 1px 0 0; border: 1px solid #000; border-radius: 4px; background: #fff; padding: 2px 0 0 3px; display: flex; flex-direction: column; gap: 1px; }
.chn > div { display: flex; align-items: center; }
.chn span { width: 49px; white-space: nowrap; }
.c1, .c2 { height: 19px; border-color: #c45c62; }
.c1 { width: 23px; background: #c2baba; font-weight: bold; }
.c2 { width: 31px; padding: 0 2px; }
.out { height: 70px; }
.sb { background: #bebebe; border: 1.5px solid #989898; border-radius: 4px; color: #333; display: flex; align-items: center; justify-content: center; white-space: nowrap; flex: none; }
.hd .sb { height: 16px; font-size: 10px; }
.dsp { width: 32px; margin-left: 2px; }
.aud { width: 58px; margin: 0 0 0 1px; }
.out-r { display: flex; align-items: center; height: 21px; padding-left: 3px; margin-top: 1px; white-space: nowrap; }
.out-r > span { width: 51px; }
.out-r .o2 { width: 50px; padding-left: 14px; }
.out-r .o3 { width: 45px; padding-left: 9px; }
.out-r .fld { width: 30px; height: 19px; }
.tog { width: 18px; height: 18px; border: 2px solid #999; background: #fff; }
.rec { width: 61px; height: 18px; margin-left: 9px; }
.setup { padding: 3px 0 0 3px; white-space: nowrap; word-spacing: .4px; }
.sends { display: flex; justify-content: space-between; }
.send:only-child { margin-left: auto; }
.node { height: 20px; border: 3px solid #c9d1b0; border-radius: 6px; background: #fff; font: 12px/14px "Liberation Sans", Arial, sans-serif; color: #000; padding: 0 1px; white-space: nowrap; width: 83px; }
.node.sm { font-size: 11px; line-height: 13px; }
.send i { display: block; width: 80px; height: 13px; border: 2px solid #333; border-radius: 3px; background: #686868; }

/* patch */
.patch { position: absolute; left: 0; top: 1098px; width: 771px; height: 199px; background: #fff; }
.wires { position: absolute; inset: 0; width: 100%; height: 100%; }
.pn { position: absolute; font: 12px/14px "Liberation Sans", Arial, sans-serif; color: #000; white-space: nowrap; }
.obj { border: 3px solid #ccd3b2; border-radius: 5px; background: #fff; padding: 0 0 0 1px; height: 20px; }
.num { border: 2px solid #7d7d7d; border-radius: 4px; background: #fff; height: 20px; width: 50px; padding: 1px 0 0 10px; }
.num::before { content: ""; position: absolute; left: 2px; top: 3px; border: 5px solid transparent; border-left: 5px solid #bbb; border-right: 0; }
.msg { border-radius: 7px; background: linear-gradient(#c4c4c4, #aeaeae); height: 19px; padding: 2px 4px; }
.n1 { left: 396px; top: -8px; }
.n2 { left: 395px; top: 18px; width: 64px; }
.n3 { left: 300px; top: 51px; width: 108px; height: 32px; line-height: 13px; white-space: normal; }
.n4 { left: 417px; top: 51px; }
.n5 { left: 525px; top: 19px; width: 54px; }
.n6 { left: 525px; top: 51px; width: 95px; }
.n7 { left: 563px; top: 92px; width: 50px; }
.n8 { left: 388px; top: 158px; width: 156px; }

/* motion */
.motion { left: -9px; top: 551px; width: 782px; height: 547px; overflow: hidden; border-radius: 4px 0 0 0; box-shadow: 0 6px 14px rgba(0, 0, 0, .6); z-index: 2; }
.motion :deep(.ttl) { margin-left: 200px; }
.mset { position: absolute; inset: 0; overflow: hidden; }
.mset.over { z-index: 3; clip-path: inset(0 1049px 199px 0); }
.gatebox { position: absolute; left: 8px; top: 27px; width: 46px; height: 51px; border: 2px solid #888; border-radius: 2px; font-size: 12.5px; line-height: 16px; padding: 6px 0 0 2px; }
.gatebox svg { position: absolute; inset: 0; width: 100%; height: 100%; }
.grp { position: absolute; border: 2.5px solid #000; border-radius: 5px; text-align: center; font-size: 10.1px; }
.g1 { left: 76px; top: 24px; width: 626px; height: 254px; }
.g2 { left: 0; top: 280px; width: 461px; height: 280px; padding: 2px 0 0 6px; }
.g3 { left: 465px; top: 280px; width: 330px; height: 280px; padding: 3px 16px 0 0; }
.mm { position: absolute; width: 150px; height: 245px; border: 1.5px solid #111; border-radius: 6px; background: #fff; overflow: hidden; font: 10px/12px "Liberation Sans", Arial, sans-serif; white-space: nowrap; display: flex; flex-direction: column; }
.mm > div { display: flex; align-items: center; flex: none; }
.mm > .mh { height: 18px; background: #cbcbcb; border-bottom: 2px solid #888; padding: 1px 1px 0; gap: 1px; font: 10px "DejaVu Sans", sans-serif; }
.mh span { margin: -1px 0 0 2px; }
.mm hr { width: 141px; height: 1px; margin: 0 0 0 4px; border: 0; background: #7d8b99; flex: none; }
.q { background: #d4d4d4; border-radius: 2px; height: 14px; font-weight: bold; padding: 1px 0 0 2px; flex: none; }
.m1 { height: 23px; }
.m1 > span:first-child { width: 34px; padding-left: 6px; }
.med { width: 44px; height: 17px; border: 2px solid #a6a9b0; border-radius: 3px; background: #d2d6dc; font: 10px/14px "DejaVu Sans", sans-serif; padding-left: 1px; color: #333; flex: none; }
.q7 { width: 25px; background: #d0d6dc; margin-left: 3px; }
.smp { margin: -1px 0 0 2px; letter-spacing: -.15px; }
.m2 { height: 16px; }
.m2 span { width: 34px; padding-left: 6px; }
.m2 .q { width: 27px; margin-right: 4px; }
.m3 { height: 20px; padding-left: 6px; gap: 1.5px; }
.m3 div { width: 26px; height: 14px; border: 1px solid #8a96a4; background: #ccd2d8; text-align: center; font-weight: bold; line-height: 13px; }
.m3 .on { background: #b0abc8; }
.m4 { height: 42px; }
.m4l { width: 125px; padding-left: 6px; align-self: flex-start; }
.mode { width: 113px; height: 19px; margin-top: 3.5px; border: 2px solid #000; border-radius: 5px; background: #d5d3e2; font: 10px/16px "DejaVu Sans", sans-serif; padding-left: 2px; color: #333; }
.wsz { display: flex; align-items: center; margin-top: 3.5px; }
.wsz span { width: 67px; padding: 2px 0 0 10px; }
.wsz .q { width: 43px; background: #d5d3e2; }
.rst { display: flex; flex-direction: column; align-items: center; width: 23px; align-self: flex-start; padding-top: 7px; }
.rst i { width: 12px; height: 12px; border: 2px solid #40308a; border-radius: 50%; }
.rst span { line-height: 10px; }
.mm > .m5 { height: 10px; line-height: 12px; }
.m5 span:first-child { width: 98px; padding-left: 46px; }
.m6 { height: 15px; }
.m6 span { width: 39px; padding-left: 18px; }
.m6 div { width: 52px; height: 15px; background: #f1f1f1; margin-right: 3px; font: 10px/15px "DejaVu Sans", sans-serif; padding-left: 2px; flex: none; }
.m7 { height: 25px; }
.m7 span { width: 37px; padding-left: 18px; }
.m7 div { width: 44px; height: 19px; border: 2px solid #000; border-radius: 4px; font: bold 11px/15px "Liberation Sans", sans-serif; padding-left: 2px; margin-right: 11px; flex: none; }
.m8 { height: 21px; }
.m8 span { width: 27px; padding-left: 4px; letter-spacing: -.1px; }
.m8 .q { width: 30px; margin-right: 3.5px; }
.sch { width: 54px; height: 18px; border: 2px solid #4aa0ac; border-radius: 9px; background: #e6e6ea; font: 9px "DejaVu Sans", sans-serif; color: #444; display: flex; align-items: center; padding-left: 2px; flex: none; margin-left: -1px; }
.sch i { width: 10px; height: 10px; border-radius: 50%; background: #c9c9d4; margin-left: 1px; }
.sch i.on { background: #33f0f0; }
.mm > .m9 { height: 51px; align-items: flex-start; }
.m9l { width: 79px; }
.m9l > div { display: flex; align-items: center; }
.m9l span { width: 27px; padding-left: 2px; letter-spacing: -.1px; }
.m9l .clip span { padding-left: 4.5px; }
.offs { height: 14px; margin-top: -1px; }
.offs div { width: 38px; height: 14px; background: #e1e0e8; border-radius: 2px; padding: 1px 0 0 2px; }
.ramp { height: 18px; }
.ramp .q:nth-child(2) { width: 26px; }
.ramp .q:nth-child(3) { width: 13px; margin-left: 6px; padding-left: 1px; }
.clip { height: 19px; }
.clip div { width: 31px; height: 17px; border: 2px solid #ddd; border-radius: 4px; font: bold 10px/13px "Liberation Sans", sans-serif; padding-left: 2px; }
.clip .bars { font: bold 10px/12px "DejaVu Sans", sans-serif; letter-spacing: .5px; }
.gph { position: relative; width: 69px; height: 45px; margin-top: 5px; border: 1px solid #b4b4b4; flex: none; }
.gph > svg { position: relative; display: block; width: 100%; height: 100%; }
.gt { position: absolute; right: 0; top: 0; width: 12.5px; height: 12.5px; border: 1.5px solid #ccc; background: #fff; }

/* binaural */
.bin { left: 771px; top: 545px; width: 611px; height: 780px; z-index: 6; box-shadow: 0 6px 16px rgba(0, 0, 0, .6); }
.bin :deep(.ttl) { margin-left: 129px; }
.bcols { display: flex; gap: 6.5px; padding: 2px 0 0 2px; }
.bcol { width: 299px; }
.sine { height: 70px; }
.so { height: 140px; }
.meter { width: 80px; height: 4px; background: #1a1a1a; border-left: 1px solid #2a8a2a; margin-right: 34px; }
.frq { display: flex; align-items: center; margin-top: 11px; }
.frq > span { width: 71px; padding-left: 18px; }
.frq .md { width: 55px; padding-left: 21px; }
.fq { width: 46px; height: 19px; padding: 0 2px; }
.s-mode { width: 82.5px; height: 19px; padding-left: 2px; }
.hd > .sot { font-size: 10.2px; }
.so .dsp { width: 34px; }
.so .aud { width: 59px; margin: 0 1px 0 2px; }
.so-b { display: flex; }
.so-l { width: 228px; }
.gry { background: #a9a9a9; border-radius: 4px; width: 225px; display: flex; }
.g-a { height: 37px; margin-top: 4px; padding-left: 2px; }
.chs { display: flex; flex-direction: column; gap: 2px; }
.chs .fld { width: 29px; height: 18px; }
.mtr { margin: 2px 0 0 23px; display: flex; flex-direction: column; gap: 1px; }
.mtr i { width: 165px; height: 15.5px; background: #1a1a1a; border-left: 1px solid #2a8a2a; }
.g-b { height: 23px; margin-top: 3px; padding-left: 2px; align-items: center; }
.g-b .fld { width: 35px; height: 18px; }
.dial { width: 18px; height: 18px; border-radius: 50%; background: radial-gradient(circle, #a8a8a8 0 2px, transparent 2.5px), linear-gradient(#a8a8a8, #a8a8a8) center top/1.5px 9px no-repeat, #fff; margin: 0 4px 0 5px; }
.gain { position: relative; width: 155px; height: 19px; background: #fff; border: 1px solid #999; display: flex; align-items: center; }
.gain div { height: 100%; background: #d5d5d5; flex: none; }
.gain span { position: absolute; left: 9px; }
.so-r { display: flex; flex-direction: column; gap: 2px; padding-top: 6px; }
.rec2 { width: 61px; height: 18px; padding-top: 1px; }
.s-fmt { width: 60px; height: 18px; padding-left: 2px; }
.sat { margin: 5px 0 0 3px; width: 290px; height: 46px; background: #a9a9a9; border: 1.5px solid #000; border-radius: 5px; padding: 2px 0 0 6px; display: flex; white-space: nowrap; }
.sat-l { width: 146px; }
.sat-l > div, .sat-r > div { display: flex; align-items: center; height: 19px; }
.sat-l > .lim { height: 18px; }
.sat-r > div + div { margin-top: 2px; }
.sl { width: 57px; padding-left: 4px; }
.tri { position: relative; width: 40px; height: 19px; padding-left: 11px; }
.tri::before { content: ""; position: absolute; left: 2px; top: 3px; border: 5px solid transparent; border-left: 5px solid #bbb; border-right: 0; }
.pc { padding-left: 5px; }
.pr { width: 71px; }
.pf { width: 59.5px; height: 18px; padding: 0 2px; }
.bin > .strip { position: absolute; left: 0; right: 0; top: 734px; height: 60px; background: #e9e9e9; border-top: 1px solid #ccc; }
.pop { position: absolute; z-index: 2; width: 149px; height: 69px; border-radius: 5px; background: #dcdcdd; box-shadow: 0 2px 6px rgba(0, 0, 0, .45); overflow: hidden; font: 10px/12px "Liberation Sans", Arial, sans-serif; white-space: nowrap; }
.ph { display: flex; align-items: center; height: 19px; background: linear-gradient(#d2d0dc 0 10px, #c7c4da 10px); font: 11px "DejaVu Sans", sans-serif; padding: 0 3px 0 2px; }
.ph span { margin-left: 3px; }
.ph em { margin-left: auto; width: 22px; height: 17px; border: 3px solid #5a22b0; border-radius: 9px; background: #4c4c52; color: #fff; font: 9px/11px "DejaVu Sans", sans-serif; text-align: center; }
.pl { display: flex; height: 12px; padding-left: 33px; }
.pl b { width: 29px; }
.pl b + b { width: 36px; }
.pw { display: flex; align-items: center; height: 17px; margin-bottom: 3px; }
.pw > span:first-child { width: 21px; padding-left: 2px; }
.pw b { width: 36px; height: 17px; background: #fafafa; border-radius: 2px; padding: 3px 0 0 4px; margin-right: 2px; font-size: 9.5px; }
.pw b + b { width: 35px; }
.pw u { width: 35px; height: 17px; background: #fafafa; padding: 3px 0 0 4px; text-decoration: none; border-radius: 2px; font-size: 9.5px; }
.pw s { width: 32px; padding-left: 4px; text-decoration: none; font-weight: bold; font-size: 9.5px; }
.ms { margin-left: 1px; }

/* myUes */
.ues { left: 1678px; top: 748px; width: 190px; height: 144px; overflow: hidden; }
.ues :deep(.ttl) { margin-left: 43px; }
.uh { display: flex; align-items: center; height: 20px; margin: 2px 0 0 2px; padding-left: 2px; background: #d0d0d0; border: 1px solid #999; border-radius: 6px 0 0 0; font-size: 11px; flex: none; }
.uh span { width: 75px; padding-left: 3px; }
.auto { width: 90px; height: 17px; border: 2px solid #8d8d8d; border-radius: 8px; background: #cfcfcf; padding-left: 2px; line-height: 14px; font-size: 11.6px; }
.ub { margin-left: 2px; height: 50px; background: #37001d; border-radius: 0 0 0 5px; padding: 3px 0 0 5px; display: flex; flex-direction: column; gap: 3px; flex: none; }
.ur { display: flex; align-items: center; height: 20px; flex: none; }
.ur span { width: 76px; font-size: 15.8px; color: #d9cfd4; }
.hyp { width: 110px; height: 20px; border: 2px solid #b39590; border-radius: 4px; background: #8a6a62; color: #e8dcdc; font-size: 11.8px; padding-left: 2px; line-height: 16px; }
.ubt { width: 67px; height: 20px; border-radius: 8px; background: #ab94a2; color: #2e2e2e; font-size: 11.8px; text-align: center; line-height: 20px; }
.u2 { margin-left: 8px; flex: none; }
.uf { margin-top: 5px; height: 20px; background: #e9e9e9; border-top: 1px solid #ccc; border-bottom: 1px solid #bbb; flex: none; }
.ut { display: flex; align-items: center; height: 26px; background: linear-gradient(#e2e2e2, #cfcfcf); }

/* spat */
.spat { left: 1383px; top: 901px; width: 470px; height: 420px; }
.spat :deep(.tbar) { height: 22px; }
.spat :deep(.ttl) { margin-left: 243px; }
.canvas { position: relative; flex: 1; overflow: hidden; }
.canvas > * { position: absolute; }
.amb { left: 3px; top: 2px; width: 300px; height: 175px; border: 1.5px solid #2c2466; border-radius: 5px; background: #dfdfdf; overflow: hidden; font-family: "Liberation Sans", Arial, sans-serif; }
.ah { display: flex; align-items: center; height: 19px; background: #a3a1ba; border-bottom: 1.5px solid #2c2466; font: 11px "DejaVu Sans", sans-serif; padding-left: 1px; }
.at { width: 146px; padding-left: 3px; }
.ac { width: 37px; font: 10px "Liberation Sans", sans-serif; display: flex; justify-content: flex-end; padding-right: 1px; flex: none; }
.ah .ap { width: 98px; height: 18px; font-size: 10px; }
.ab { display: flex; }
.al { width: 146px; display: flex; flex-direction: column; }
.ag { width: 145px; height: 51px; background: #c0c0c0; padding: 5px 0 0 1px; display: flex; flex-direction: column; gap: 3px; flex: none; }
.r1, .r2 { display: flex; align-items: center; white-space: nowrap; }
.h100 { width: 28px; height: 17px; background: #e4e4e4; font-size: 9.5px; }
.r1 span { width: 91px; padding-left: 3px; }
.r1 em { width: 22px; height: 18px; border: 2px solid #2fe0e8; border-radius: 9px; background: #858585; color: #fff; font: 9.5px/14px "DejaVu Sans", sans-serif; text-align: center; }
.h8 { width: 39px; height: 21px; border-color: #000; background: #e0e0e0; font: bold 12.5px "Liberation Sans", sans-serif; }
.r2 span { padding-left: 5px; }
.cap { font-size: 9.1px; color: #444; line-height: 12px; }
.c-1 { margin: 8px 0 1px 19px; }
.c-2 { margin: 4.5px 0 0 32px; }
.tri3 { display: flex; gap: 4px; padding-left: 15px; }
.tri3 b { width: 31px; height: 14px; background: #fff; padding: 1px 0 0 2px; font-size: 9.8px; }
.bt3 { display: flex; gap: 3px; padding: 3px 0 0 14px; }
.bt3 b { height: 16px; border: 2px solid #949494; border-radius: 4px; background: #bcbcbc; text-align: center; line-height: 12px; }
.x1 { width: 31px; }
.bt3 .x1 { background: #858585; border-color: #5e5e5e; }
.bt3 .x2 { width: 34px; border-color: #34c8cc; background: #8a8a8a; color: #fff; }
.bt3 .x3 { width: 33px; font-weight: normal; font-size: 9.8px; font-family: "DejaVu Sans", sans-serif; letter-spacing: -.3px; }
.xyz { display: flex; height: 7px; line-height: 6px; color: #555; padding-left: 8px; }
.xyz span { width: 34px; text-align: center; }
.am { width: 118px; display: flex; flex-direction: column; align-items: flex-start; }
.ml1, .ml2 { padding-left: 11px; margin-top: 4px; white-space: nowrap; }
.rdm { margin: 1px 0 0 9px; width: 60px; height: 16px; background: #010130; color: #fff; font: bold 10.2px/15px "DejaVu Sans", sans-serif; padding-left: 2px; }
.rdm.r3 { width: 44px; height: 15px; background: #150038; font: bold 10.5px/15px "Liberation Sans", sans-serif; margin-bottom: 10px; }
.aj { width: 104px; height: 18px; margin: 0 0 2px .5px; font: 10px "DejaVu Sans", sans-serif; }
.ix { display: flex; align-items: center; }
.ix .fld { width: 24px; height: 18px; font-weight: bold; background: #e4e4e4; margin-right: 7px; }
.src { display: grid; grid-auto-flow: column; grid-template-rows: repeat(8, 17px); grid-auto-columns: 19px; padding-top: 3.5px; margin-left: -7px; place-items: center; }
.src i { width: 12px; height: 12px; border-radius: 50%; background: #6c8468; font: bold 9.5px/12px "Liberation Sans", sans-serif; display: flex; justify-content: center; }
.src i.on { background: #2ee0e4; box-shadow: inset 0 0 0 1.5px #5fa090; }
.pm { left: 107px; top: 2px; width: 66px; height: 19px; }
.canvas > .q8 { position: absolute; left: 308px; top: 6px; width: 37px; }
.nsrc { left: 348px; top: 9px; }
.vw { left: 393px; top: 7px; width: 60px; height: 17px; border: 1.5px solid #111; padding: 0 0 0 8px; justify-content: flex-start; font-size: 10.5px; }
.srcs { left: 308px; top: 27px; width: 200px; height: 69px; }
.dump { width: 60px; margin-left: 28px; justify-content: flex-start; padding-left: 2px; }
.srcs .hd span { width: 50px; }
.sc1 { display: flex; padding: 8px 0 0 3px; font-size: 10px; }
.sc1 span:nth-child(1) { width: 54px; }
.sc1 span:nth-child(2) { width: 53px; }
.sc2 { display: flex; padding: 4px 0 0 1px; }
.sc2 .fld { width: 24px; height: 19px; margin-right: 5px; }
.sc2 .s-src { width: 67px; padding-left: 2px; }
.spin { width: 60px; height: 19px; margin-left: 6px; border: 2px solid #7d7d7d; border-radius: 4px; background: #b8b8b8; padding-left: 4px; }
.spin svg { width: 20px; height: 15px; }
.jm { left: 308px; top: 100px; width: 200px; border-color: #000; }
.tg2 { left: 313px; top: 130px; width: 20px; height: 20px; }
.canvas > .q11 { position: absolute; left: 339px; top: 132px; width: 41px; }
.pb { left: 304px; top: 153px; width: 79px; }
.pr2 { left: 387px; top: 155px; width: 100px; border-color: #5a58cc; }
.si { left: 4px; top: 183px; width: 65px; height: 19px; }
.big { left: 73px; top: 179px; width: 500px; height: 22px; border-color: #4a8ccc; font: bold 14px/16px "Liberation Sans", sans-serif; }
.mix { left: 4px; top: 204px; display: flex; }
.hatch { width: 45.5px; height: 80px; border-radius: 3px; border: 2px solid #888; background: repeating-linear-gradient(135deg, #9f9f9f 0 5px, #ccd0ac 5px 12px); padding-top: 14px; flex: none; }
.hatch i { display: block; margin: 0 1px; height: 11px; background: repeating-linear-gradient(#f0f0f0 0 3px, #c8c8c8 3px 4px); }
.ch { width: 30px; height: 80px; border: 2px solid #333; border-bottom: 3px solid #333; border-radius: 3px; background: linear-gradient(#6d6d6d, #626262); color: #fff; font: bold 12px "Liberation Sans", sans-serif; text-align: center; padding: 8px 7px 0 0; flex: none; }
.ch:nth-child(n+11) { padding: 8px 0 0; }
.spo { left: 7px; top: 287px; width: 300px; }
.canvas > .strip { left: 0; right: 0; top: 358px; height: 60px; background: #e9e9e9; border-top: 1px solid #ccc; }

/* oscnet */
.osc { left: 1388px; top: 503px; width: 269px; height: 410px; z-index: 10; box-shadow: 0 12px 26px rgba(0, 0, 0, .75), 0 0 2px rgba(0, 0, 0, .6); }
.osc :deep(.tbar) { height: 22px; }
.osc :deep(.ttl) { margin-left: 27px; }
.ocv { position: relative; height: 342px; background: #fff; flex: none; }
.ob { position: absolute; border: 3px solid; border-radius: 5px; background: #fff; color: #111; line-height: 12px; padding: 0 0 0 1px; white-space: nowrap; }
.ob.a { font: 11px/12px "Liberation Sans", Arial, sans-serif; }
.ob.l { font-size: 12px; line-height: 13px; }
.ob.wrap { white-space: normal; }
.ybang { position: absolute; left: 94px; top: 31px; width: 20px; height: 20px; background: #e9e9e9; border-radius: 2px; display: flex; align-items: center; justify-content: center; }
.ybang i { width: 16px; height: 16px; border-radius: 50%; background: #ffe030; border: 2px solid #aaa; }
.note { position: absolute; left: 184px; line-height: 12px; white-space: nowrap; }
.of1 { height: 20px; background: #c9c9c9; border-top: 1px solid #aaa; border-bottom: 1px solid #a0a0a0; flex: none; }
.of2 { flex: 1; display: flex; align-items: center; background: linear-gradient(#bdbdbd, #a4a4a4); border-radius: 0 0 4px 4px; }
</style>
